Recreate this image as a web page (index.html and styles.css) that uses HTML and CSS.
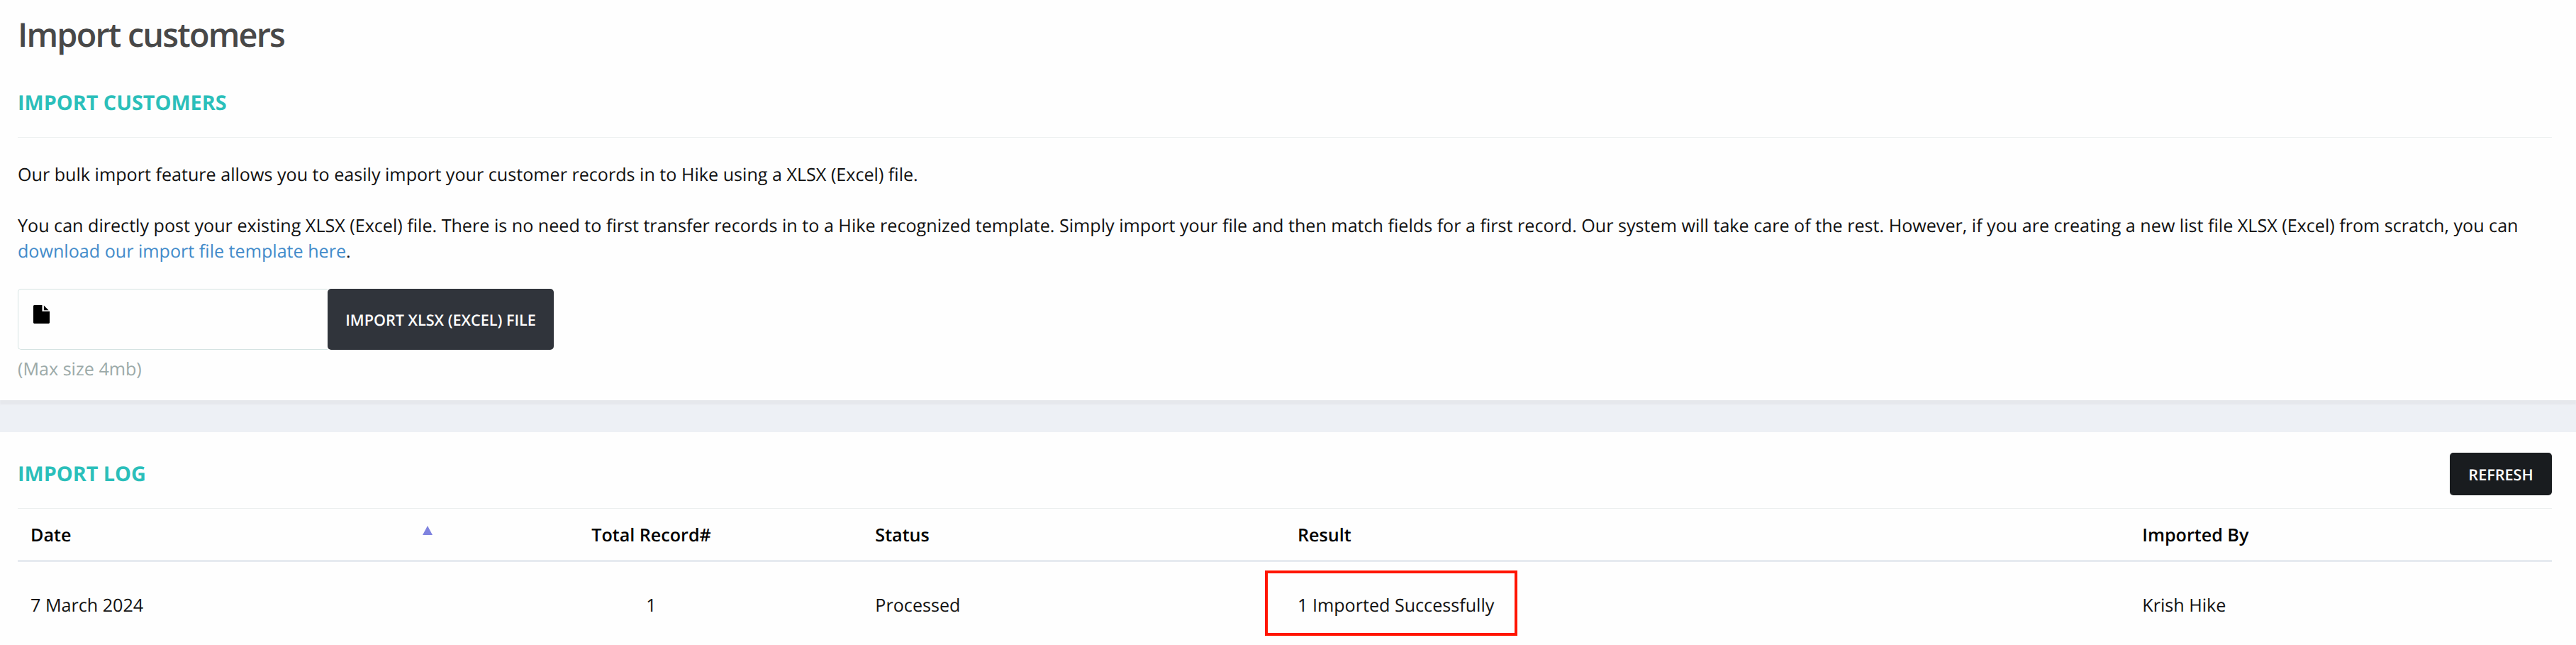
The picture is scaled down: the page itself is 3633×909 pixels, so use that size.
FILE: index.html
```html
<!DOCTYPE html>
<html lang="en">
<head>
    <meta charset="UTF-8">
    <meta name="viewport" content="width=device-width, initial-scale=1.0">
    <title>Import customers</title>
    <link rel="stylesheet" href="styles.css">
</head>
<body>
    <section class="panel import-panel">
        <h1>Import customers</h1>
        <h2 class="section-title">IMPORT CUSTOMERS</h2>

        <div class="intro">
            <p>Our bulk import feature allows you to easily import your customer records in to Hike using a XLSX (Excel) file.</p>
            <p>You can directly post your existing XLSX (Excel) file. There is no need to first transfer records in to a Hike recognized template. Simply import your file and then match fields for a first record. Our system will take care of the rest. However, if you are creating a new list file XLSX (Excel) from scratch, you can<br><a href="#">download our import file template here</a>.</p>
        </div>

        <div class="file-input">
            <div class="file-name">
                <svg class="file-icon" viewBox="0 0 24 27">
                    <path d="M2 0H13V9H24V25.5Q24 27 22.5 27H1.5Q0 27 0 25.5V1.5Q0 0 2 0Z"/>
                    <path d="M15.5 0.5L22.5 7.5H15.5Z"/>
                </svg>
            </div>
            <button class="btn btn-import">IMPORT XLSX (EXCEL) FILE</button>
        </div>
        <div class="hint">(Max size 4mb)</div>
    </section>

    <section class="panel log-panel">
        <div class="log-header">
            <h2>IMPORT LOG</h2>
            <button class="btn btn-refresh">REFRESH</button>
        </div>

        <table class="log-table">
            <thead>
                <tr>
                    <th><div class="sortable">Date <span class="sort-asc"></span></div></th>
                    <th class="center">Total Record#</th>
                    <th>Status</th>
                    <th class="wide">Result</th>
                    <th>Imported By</th>
                </tr>
            </thead>
            <tbody>
                <tr>
                    <td>7 March 2024</td>
                    <td class="center">1</td>
                    <td>Processed</td>
                    <td class="result"><span>1 Imported Successfully</span><div class="highlight"></div></td>
                    <td>Krish Hike</td>
                </tr>
            </tbody>
        </table>
    </section>
</body>
</html>
```

FILE: styles.css
```css
* {
    box-sizing: border-box;
}

body {
    margin: 0;
    background: #edf0f5;
    color: #111;
    font-family: "Open Sans", sans-serif;
    font-size: 25.14px;
    line-height: 36px;
    text-rendering: geometricPrecision;
    overflow: hidden;
}

h1, h2, p {
    margin: 0;
}

.panel {
    background: #fefefe;
    padding: 0 34px 0 25px;
}

.import-panel {
    height: 564px;
    padding-top: 16px;
    box-shadow: 0 6px 2px #e6e8ec;
}

h1 {
    color: #484848;
    font-size: 46.8px;
    font-weight: 600;
    line-height: 64px;
    letter-spacing: -1.8px;
}

h2 {
    color: #2bbfba;
    font-size: 28.8px;
    font-weight: 700;
    line-height: 40px;
}

.section-title {
    padding: 45px 0 28px;
    border-bottom: 1px solid #ebeeee;
}

.intro {
    padding: 34px 0 35px;
}

.intro p + p {
    margin-top: 36px;
}

.intro a {
    color: #428bca;
    text-decoration: none;
}

.file-input {
    display: flex;
    width: 756px;
    height: 86px;
}

.file-name {
    width: 437px;
    border: 1px solid #d5e3e2;
    border-right: 0;
    border-radius: 5px 0 0 5px;
    padding: 22px 21px;
}

.file-icon {
    display: block;
    width: 23px;
    height: 26px;
    fill: #000;
}

.btn {
    border: 0;
    border-radius: 5px;
    color: #fff;
    font-family: inherit;
    font-size: 21.6px;
    font-weight: 600;
    text-rendering: inherit;
    padding: 2px 0 0;
}

.btn-import {
    flex: 1;
    background: #30343b;
}

.hint {
    color: #9caaa9;
    padding-top: 9px;
}

.log-panel {
    margin-top: 45px;
    height: 300px;
}

.log-header {
    display: flex;
    justify-content: space-between;
    align-items: center;
    height: 108px;
    padding-top: 11px;
    border-bottom: 1px solid #ebeeee;
}

.btn-refresh {
    width: 144px;
    height: 60px;
    background: #191c1f;
}

.log-table {
    width: 100%;
    table-layout: fixed;
    border-collapse: separate;
    border-spacing: 0;
}

th, td {
    padding: 0 18px;
    text-align: left;
}

th {
    height: 75px;
    padding-top: 2px;
    border-bottom: 3px solid #e6eaf0;
    color: #000;
    font-weight: 600;
}

th.wide {
    width: 33.333%;
}

td {
    height: 122px;
}

.center {
    text-align: center;
}

.sortable {
    display: flex;
    justify-content: space-between;
    align-items: center;
}

.sort-asc {
    border: 7px solid transparent;
    border-top: 0;
    border-bottom: 13px solid #7f83df;
    margin: 0 -7px 14px 0;
}

.result {
    position: relative;
}

/* red frame around the import result */
.highlight {
    position: absolute;
    top: 12px;
    left: -28px;
    width: 356px;
    height: 92px;
    border: 4px solid #ff1500;
}
```
